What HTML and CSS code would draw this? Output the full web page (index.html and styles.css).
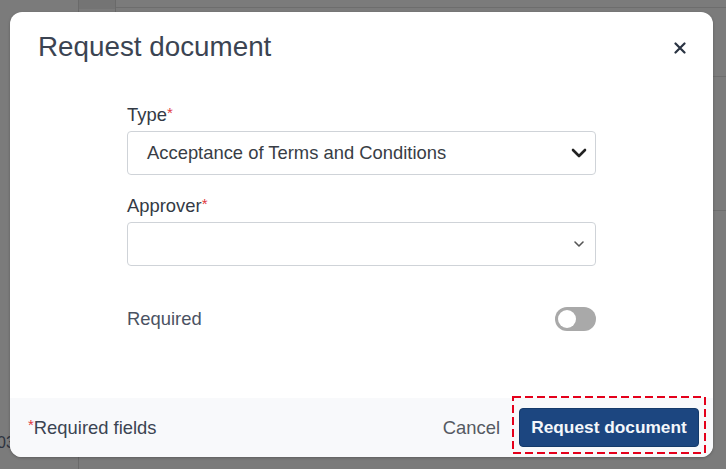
FILE: index.html
```html
<!DOCTYPE html>
<html lang="en">
<head>
<meta charset="utf-8">
<title>Request document</title>
<link rel="stylesheet" href="styles.css">
</head>
<body>
<span class="behind-text">03</span>
<div class="modal" role="dialog" aria-labelledby="dlg-title">
  <header class="modal-header">
    <h1 id="dlg-title" class="modal-title">Request document</h1>
    <button class="close-btn" aria-label="Close">
      <svg width="12" height="12" viewBox="0 0 12 12"><path d="M1.5 1.5 L10.5 10.5 M10.5 1.5 L1.5 10.5" stroke="#2a3342" stroke-width="2.2" stroke-linecap="round"/></svg>
    </button>
  </header>
  <div class="modal-body">
    <div class="form">
      <div class="field">
        <label class="field-label">Type<span class="req">*</span></label>
        <div class="select">
          <span class="select-value">Acceptance of Terms and Conditions</span>
          <svg class="chev-bold" width="16" height="10" viewBox="0 0 16 10"><path d="M2 2 L8 8 L14 2" fill="none" stroke="#222" stroke-width="2.6" stroke-linecap="round" stroke-linejoin="round"/></svg>
        </div>
      </div>
      <div class="field">
        <label class="field-label">Approver<span class="req">*</span></label>
        <div class="select select-empty">
          <span class="select-value"></span>
          <svg class="chev-small" width="12" height="8" viewBox="0 0 12 8"><path d="M2 2 L6 6 L10 2" fill="none" stroke="#555" stroke-width="1.6" stroke-linecap="round" stroke-linejoin="round"/></svg>
        </div>
      </div>
      <div class="toggle-row">
        <span class="toggle-label">Required</span>
        <span class="toggle"><span class="knob"></span></span>
      </div>
    </div>
  </div>
  <footer class="modal-footer">
    <span class="req-note"><span class="req">*</span>Required fields</span>
    <div class="actions">
      <button class="btn-cancel">Cancel</button>
      <span class="highlight">
        <button class="btn-primary">Request document</button>
        <svg class="dash" width="194" height="58" viewBox="0 0 194 58"><rect x="1" y="1" width="192" height="56" fill="none" stroke="#e4001b" stroke-width="2" stroke-dasharray="8 4"/></svg>
      </span>
    </div>
  </footer>
</div>
</body>
</html>
```

FILE: styles.css
```css
* { box-sizing: border-box; }

html, body {
  margin: 0;
  padding: 0;
  width: 726px;
  height: 469px;
  overflow: hidden;
}

body {
  position: relative;
  font-family: "Liberation Sans", Arial, sans-serif;
  background-color: #7b7b7b;
  background-image:
    linear-gradient(#6a6a6a, #6a6a6a),
    linear-gradient(#6a6a6a, #6a6a6a),
    linear-gradient(#747474, #747474),
    linear-gradient(#6d6d6d, #6d6d6d),
    linear-gradient(#6d6d6d, #6d6d6d),
    linear-gradient(#6d6d6d, #6d6d6d);
  background-position: 78px 0, 115px 0, 78px 0, 115px 7px, 713px 76px, 713px 210px;
  background-size: 1px 100%, 1px 12px, 37px 9px, 100% 1px, 13px 1px, 13px 1px;
  background-repeat: no-repeat;
}

.behind-text {
  position: absolute;
  left: -3px;
  top: 434px;
  font-size: 16px;
  color: #2e3340;
}

.modal {
  position: absolute;
  left: 10px;
  top: 12px;
  width: 703px;
  height: 445px;
  background: #fff;
  border-radius: 12px;
  overflow: hidden;
  display: flex;
  flex-direction: column;
  box-shadow: 0 1px 3px rgba(0,0,0,0.25);
}

.modal-header {
  display: flex;
  align-items: center;
  justify-content: space-between;
  padding: 19px 27px 0 28px;
}

.modal-title {
  margin: 0;
  font-size: 27.8px;
  line-height: 32px;
  font-weight: normal;
  color: #3b4452;
}

.close-btn {
  border: 0;
  background: none;
  padding: 0;
  width: 12px;
  height: 12px;
  display: flex;
  margin-top: 2px;
}

.modal-body {
  padding: 41px 0 0 117px;
}

.form {
  width: 469px;
  display: flex;
  flex-direction: column;
  gap: 20px;
}

.field {
  display: flex;
  flex-direction: column;
  gap: 5px;
}

.field-label {
  font-size: 18.4px;
  line-height: 22px;
  height: 22px;
  color: #333a45;
}

.req {
  color: #e0383e;
  font-size: 15px;
  line-height: 0;
  position: relative;
  top: -3px;
}

.select {
  height: 44px;
  border: 1px solid #cfd3d8;
  border-radius: 4px;
  display: flex;
  align-items: center;
  justify-content: space-between;
  padding: 0 8px 0 19px;
}

.select-value {
  font-size: 18.4px;
  color: #383d45;
}

.chev-small { margin-right: 2px; }

.toggle-row {
  margin-top: 21px;
  display: flex;
  align-items: center;
  justify-content: space-between;
  height: 24px;
}

.toggle-label {
  font-size: 18.4px;
  color: #4a5262;
}

.toggle {
  width: 41px;
  height: 24px;
  border-radius: 12px;
  background: #a9a9a9;
  display: flex;
  align-items: center;
  padding-left: 3px;
}

.knob {
  width: 18px;
  height: 18px;
  border-radius: 50%;
  background: #fff;
}

.modal-footer {
  margin-top: auto;
  height: 59px;
  background: #f8f9fb;
  display: flex;
  align-items: center;
  justify-content: space-between;
  padding: 0 14px 0 18px;
}

.req-note {
  font-size: 18.4px;
  color: #3b4452;
}

.req-note .req { top: -4px; }

.actions {
  display: flex;
  align-items: center;
  gap: 19px;
}

.btn-cancel {
  border: 0;
  background: none;
  padding: 0;
  font-family: inherit;
  font-size: 18.4px;
  color: #555a62;
}

.highlight {
  position: relative;
  display: flex;
}

.btn-primary {
  height: 39px;
  width: 180px;
  border: 1px solid #143a6a;
  border-radius: 4px;
  background: #1c4680;
  color: #f4f7fb;
  font-family: inherit;
  font-weight: bold;
  font-size: 17.3px;
  padding: 0;
}

.dash {
  position: absolute;
  left: -7px;
  top: -12px;
}
```
